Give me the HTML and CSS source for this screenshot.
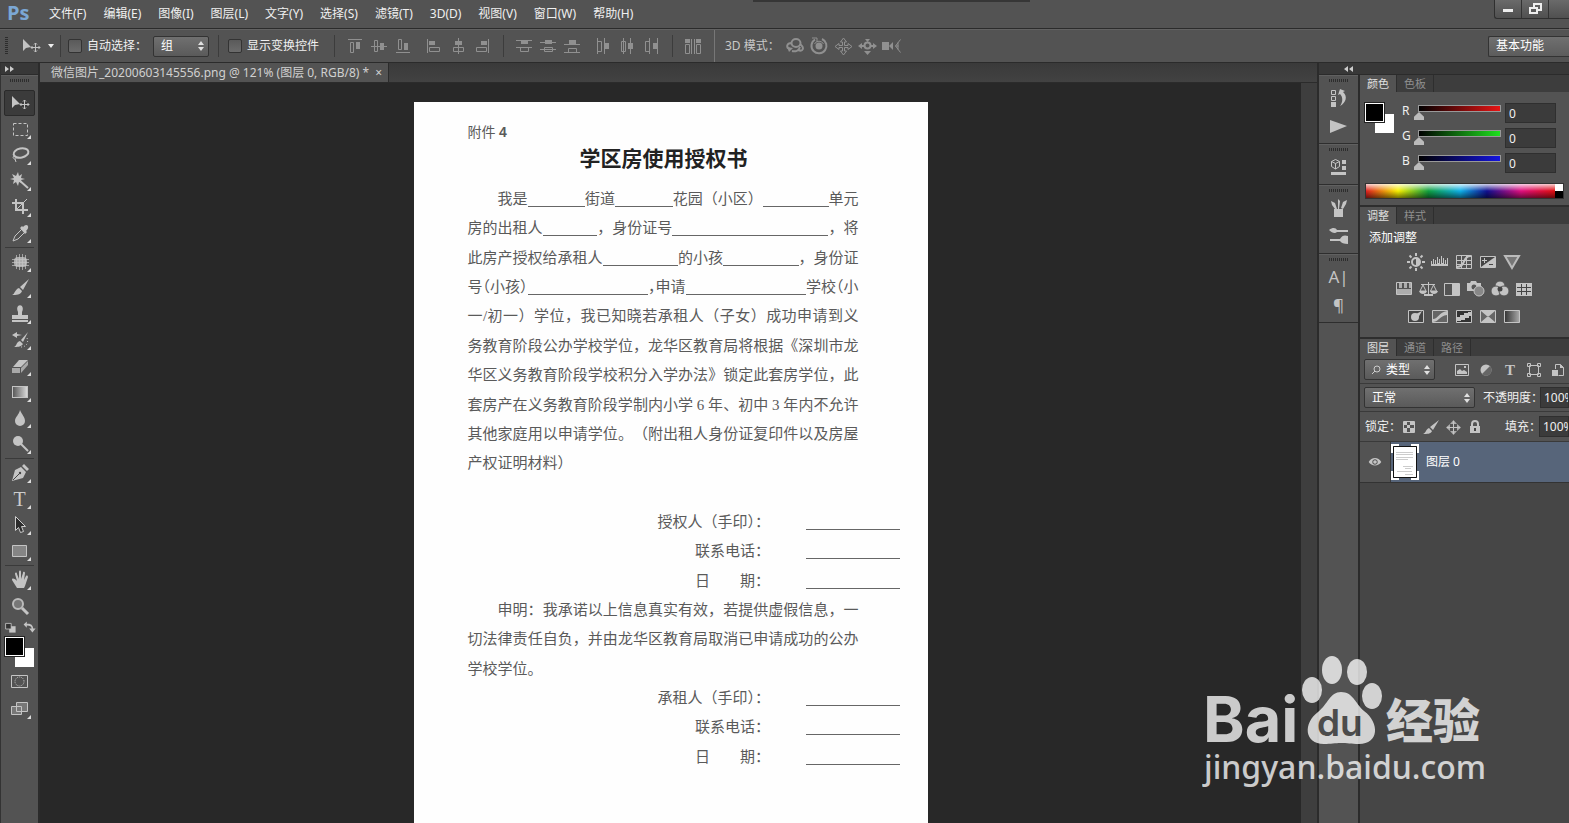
FILE: index.html
```html
<!DOCTYPE html>
<html lang="zh-CN">
<head>
<meta charset="utf-8">
<title>微信图片_20200603145556.png</title>
<link rel="stylesheet" href="styles.css">
</head>
<body>
<svg class="defs" aria-hidden="true">
  <defs>
    <linearGradient id="fade"><stop offset="0" stop-color="#555"/><stop offset="1" stop-color="#ddd"/></linearGradient>
    <linearGradient id="fadeDark"><stop offset="0" stop-color="#333"/><stop offset="1" stop-color="#aaa"/></linearGradient>
    <symbol id="move" viewBox="0 0 20 20"><path d="M2 3v12l3-3 5-1z"/><path class="s" d="M14.500 7v9M10 11.500h9M13 8.500l1.500-1.500 1.500 1.500M13 14.500l1.500 1.500 1.500-1.500M11.500 10l-1.500 1.500 1.500 1.500M17.500 10l1.500 1.500-1.500 1.500"/></symbol>
    <symbol id="updown" viewBox="0 0 6 10"><path d="M3 0l3 4H0zM3 10l3-4H0z"/></symbol>
  </defs>
</svg>

<header class="menubar">
  <span class="ps">Ps</span>
  <nav class="menus">
    <button>文件(F)</button><button>编辑(E)</button><button>图像(I)</button><button>图层(L)</button><button>文字(Y)</button><button>选择(S)</button><button>滤镜(T)</button><button>3D(D)</button><button>视图(V)</button><button>窗口(W)</button><button>帮助(H)</button>
  </nav>
  <div class="top-shadow"></div>
  <div class="winbtns">
    <button aria-label="最小化"><svg class="i" viewBox="0 0 20 20"><path d="M5 10h10v3H5z"/></svg></button>
    <button aria-label="还原"><svg class="i" viewBox="0 0 20 20"><path fill-rule="evenodd" d="M8 4h9v8h-4v3H4V8h4zm2 2v2h3v2h2V6zM6 10v3h5v-3z"/></svg></button>
    <button aria-label="关闭"></button>
  </div>
</header>

<div class="options">
  <span class="vgrip"></span>
  <svg class="i opt-move"><use href="#move"/></svg>
  <svg class="caret" viewBox="0 0 6 4"><path d="M0 0h6L3 4z"/></svg>
  <span class="vsep"></span>
  <label class="check"><input type="checkbox">自动选择：</label>
  <span class="select w-group"><select aria-label="自动选择"><option>组</option></select><svg class="ud"><use href="#updown"/></svg></span>
  <span class="vsep sp"></span>
  <label class="check wide"><input type="checkbox">显示变换控件</label>
  <span class="vsep"></span>
  <div class="aligns dim">
    <svg class="i" viewBox="0 0 20 20"><path class="s" d="M3 3.500h14M5.500 6.500h3v10h-3z"/><path d="M11 6h4v7h-4z"/></svg>
    <svg class="i" viewBox="0 0 20 20"><path class="s" d="M2 10.500h16M5.500 4.500h3v11h-3z"/><path d="M11 7h4v7h-4z"/></svg>
    <svg class="i" viewBox="0 0 20 20"><path class="s" d="M3 16.500h14M5.500 3.500h3v10h-3z"/><path d="M11 7h4v7h-4z"/></svg>
  </div>
  <div class="aligns dim next">
    <svg class="i" viewBox="0 0 20 20"><path class="s" d="M3.500 3v14M5.500 11.500h10v4h-10z"/><path d="M5 5h6v4H5z"/></svg>
    <svg class="i" viewBox="0 0 20 20"><path class="s" d="M10.500 2v16M5.500 11.500h10v4h-10z"/><path d="M7 5h7v4H7z"/></svg>
    <svg class="i" viewBox="0 0 20 20"><path class="s" d="M16.500 3v14M4.500 11.500h10v4h-10z"/><path d="M9 5h6v4H9z"/></svg>
  </div>
  <span class="vsep"></span>
  <div class="aligns dim">
    <svg class="i" viewBox="0 0 20 20"><path class="s" d="M2 4.500h16M2 11.500h16M6.500 11.500h8v4h-8z"/><path d="M7 4h7v4H7z"/></svg>
    <svg class="i" viewBox="0 0 20 20"><path class="s" d="M2 6.500h16M2 13.500h16M6.500 11.500h8v4h-8z"/><path d="M7 4h7v4H7z"/></svg>
    <svg class="i" viewBox="0 0 20 20"><path class="s" d="M2 8.500h16M2 16.500h16M6.500 12.500h8v4h-8z"/><path d="M7 4h7v4H7z"/></svg>
  </div>
  <div class="aligns dim next">
    <svg class="i" viewBox="0 0 20 20"><path class="s" d="M4.500 2v16M11.500 2v16M4.500 5.500h4v10h-4z"/><path d="M12 7h4v6h-4z"/></svg>
    <svg class="i" viewBox="0 0 20 20"><path class="s" d="M6.500 2v16M13.500 2v16M4.500 5.500h4v10h-4z"/><path d="M11 7h5v6h-5z"/></svg>
    <svg class="i" viewBox="0 0 20 20"><path class="s" d="M8.500 2v16M16.500 2v16M4.500 5.500h4v10h-4z"/><path d="M12 7h4v6h-4z"/></svg>
  </div>
  <span class="vsep"></span>
  <div class="aligns dim"><svg class="i" viewBox="0 0 20 20"><path class="s" d="M2.500 8.500h4v9h-4zM13.500 8.500h4v9h-4zM8.500 3v15M11.500 3v15"/><path d="M2 3h5v4H2zM13 3h5v4h-5z"/></svg></div>
  <span class="vsep light"></span>
  <span class="mode">3D 模式：</span>
  <div class="aligns dim">
    <svg class="i" viewBox="0 0 20 20"><g class="s2"><ellipse cx="11" cy="7" rx="4.500" ry="4"/><path d="M7 7c-6 0-6 5-2 6M7 15c4 1 7-1 8-4M13 14c5 2 7-2 2-6"/></g><path d="M2 11l6 1-4 4z"/></svg>
    <svg class="i" viewBox="0 0 20 20"><g class="s2"><path d="M6 3.500a7.500 7.500 0 1 0 7-.5"/></g><circle cx="10" cy="10" r="3.500"/><path class="s" d="M5.500 8a5 5 0 0 1 9 0M3 2h5v4"/></svg>
    <svg class="i" viewBox="0 0 20 20"><path class="s" d="M10.500 2l3 4h-2v3.500H15v-2l4 3-4 3v-2h-3.500V15h2l-3 4-3-4h2v-3.500H6v2l-4-3 4-3v2h3.500V6h-2z"/></svg>
    <svg class="i" viewBox="0 0 20 20"><circle class="s2" cx="10.500" cy="9.500" r="3"/><path d="M8 3h5l-2.500 3zM7 15h7l-3.500 4zM1 10l4-3v2h3v2H5v2zM20 10l-4-3v2h-3v2h3v2z"/></svg>
    <svg class="i" viewBox="0 0 20 20"><path d="M1 6h7v8H1zM8 10l4-4v8z"/><path class="s" d="M19.500 3.500l-5 6.500 5 6.500M14.500 10h3M17 6.500v7"/></svg>
  </div>
  <button class="workspace">基本功能</button>
</div>

<main class="work">
  <aside class="toolcol">
    <div class="strip"><svg viewBox="0 0 9 6"><path d="M0 0l4 3-4 3zM5 0l4 3-4 3z"/></svg></div>
    <div class="tools">
      <span class="hgrip"></span>
      <button class="tool on" aria-label="移动"><svg class="i"><use href="#move"/></svg></button>
      <button class="tool more" aria-label="选框"><svg class="i" viewBox="0 0 20 20"><path class="s" stroke-dasharray="3 2" d="M3.500 4.500h14v12h-14z"/></svg></button>
      <button class="tool more" aria-label="套索"><svg class="i" viewBox="0 0 20 20"><g class="s2"><ellipse cx="11" cy="8" rx="7.500" ry="4.500" transform="rotate(-12 11 8)"/></g><path class="s" d="M5 11c-3 0-2 3 0 3s1-2 0-3M5 14l1 3"/></svg></button>
      <button class="tool more" aria-label="魔棒"><svg class="i" viewBox="0 0 20 20"><path d="M8 1l1 4 3-2-1 4 4 1-4 1 1 3-3-1-1 4-2-4-3 2 1-4-4-1 4-1-2-4 4 2z"/><path class="s2" d="M9 9l9 8"/></svg></button>
      <button class="tool more" aria-label="裁剪"><svg class="i" viewBox="0 0 20 20"><path class="s2" d="M6 2v11h12M2 6h11v11"/><path class="s" d="M7 12l10-10"/></svg></button>
      <button class="tool more" aria-label="吸管"><svg class="i" viewBox="0 0 20 20"><path class="s" d="M3 18l2-5 7-7 3 3-7 7z"/><path d="M10 5l5 6 2-2-1-1c4-3 2-8-2-5l-1 1-1-1z"/></svg></button>
      <hr>
      <button class="tool more" aria-label="修复"><svg class="i" viewBox="0 0 20 20"><rect x="4" y="5" width="13" height="10" rx="4" opacity=".8"/><path class="s" d="M6.500 3v14M9.500 2v16M12.500 2v16M15.500 3v14M2 7.500h17M2 10.500h17M2 13.500h17" opacity=".7"/></svg></button>
      <button class="tool more" aria-label="画笔"><svg class="i" viewBox="0 0 20 20"><path d="M19 1L10 9l3 3zM9 10l3 3c-1 4-6 4-10 4 3-1 3-6 7-7z"/></svg></button>
      <button class="tool more" aria-label="图章"><svg class="i" viewBox="0 0 20 20"><path d="M8 8c-4-9 8-9 4 0v3h6v4H2v-4h6zM2 16h16v2H2z"/></svg></button>
      <button class="tool more" aria-label="历史画笔"><svg class="i" viewBox="0 0 20 20"><path d="M18 2l-7 8 2 2zM10 11l3 3c-2 3-6 3-9 3 3-1 2-5 6-6zM2 5l5-3v2l5 1-5 1v2z"/><path class="s" stroke-dasharray="1 2" d="M17 8c2 5-1 9-6 9"/></svg></button>
      <button class="tool more" aria-label="橡皮擦"><svg class="i" viewBox="0 0 20 20"><path d="M9 4h9l-7 7H3z"/><path opacity=".75" d="M2 12h8v5H2zM11 12l7-7v4l-7 8z"/></svg></button>
      <button class="tool more" aria-label="渐变"><svg class="i" viewBox="0 0 20 20"><rect class="edge" x="2.500" y="4.500" width="15" height="11" fill="url(#fade)"/></svg></button>
      <button class="tool more" aria-label="模糊"><svg class="i" viewBox="0 0 20 20"><path d="M10 2c2 5 5 7 5 11a5 5 0 0 1-10 0c0-4 4-6 5-11z"/></svg></button>
      <button class="tool more" aria-label="减淡"><svg class="i" viewBox="0 0 20 20"><circle cx="8" cy="7" r="5"/><path class="s2" d="M11 10l7 7"/></svg></button>
      <hr>
      <button class="tool more" aria-label="钢笔"><svg class="i" viewBox="0 0 20 20"><path d="M2 18l3-11 6-3 5 5-3 6zM12 3l2-2 5 5-2 2z"/><path class="cut" d="M3 17l6-6"/><circle cx="10" cy="10" r="1.200" fill="#444"/></svg></button>
      <button class="tool more type" aria-label="文字">T</button>
      <button class="tool more" aria-label="路径选择"><svg class="i" viewBox="0 0 20 20"><path fill="#2c2c2c" stroke="#ccc" d="M5.500 1.500v14l3-3 2 5 3-1-2-5h4z"/></svg></button>
      <button class="tool more" aria-label="矩形"><svg class="i" viewBox="0 0 20 20"><path class="edge" fill="#858585" d="M2.500 4.500h14v11h-14z"/></svg></button>
      <hr>
      <button class="tool more" aria-label="抓手"><svg class="i" viewBox="0 0 20 20"><path d="M7 18l-5-8c0-2 2-2 5 1L5 4c0-2 2-2 2 0l2 5V2c0-2 2-2 2 0v7l2-6c0-2 2-1 2 0l-1 7 2-4c1-1 2 0 2 1l-3 9-1 2z"/></svg></button>
      <button class="tool" aria-label="缩放"><svg class="i" viewBox="0 0 20 20"><circle cx="8" cy="8" r="5" fill="#777" stroke="#bbb" stroke-width="2"/><path class="s3" d="M12 12l6 6"/></svg></button>
      <div class="mini">
        <svg class="i" viewBox="0 0 20 20"><path d="M9 9h8v8H9z"/><path fill="#333" stroke="#ccc" d="M4.500 5.500h7v7h-7z"/></svg>
        <svg class="i" viewBox="0 0 20 20"><path d="M2 7l4-4v3c5-1 8 2 8 6h3l-4 5-4-5h3c0-3-2-4-6-4v3z"/></svg>
      </div>
      <div class="fgbg"><span class="bgc"></span><span class="fgc"></span></div>
      <button class="tool" aria-label="快速蒙版"><svg class="i" viewBox="0 0 20 20"><path class="s" d="M1.500 3.500h16v12h-16z"/><circle class="s" stroke-dasharray="1 1" cx="9.500" cy="9.500" r="4.500"/></svg></button>
      <button class="tool more" aria-label="屏幕模式"><svg class="i" viewBox="0 0 20 20"><path class="edge" fill="#777" d="M1.500 7.500h10v8h-10zM6.500 3.500h11v9h-11z"/></svg></button>
    </div>
  </aside>

  <section class="docarea">
    <div class="tabs"><div class="doctab">微信图片_20200603145556.png @ 121% (图层 0, RGB/8) *<button aria-label="关闭文档">×</button></div></div>
    <div class="canvas">
      <article class="page">
        <p class="attach">附件 <b>4</b></p>
        <h1>学区房使用授权书</h1>
        <div class="lines">
          <p class="fl ind">我是<i class="b56"></i>街道<i class="b56"></i>花园（小区）<i class="b64"></i>单元</p>
          <p class="fl">房的出租人<i class="b56"></i>，身份证号<i class="b160"></i>，将</p>
          <p class="fl">此房产授权给承租人<i class="b76"></i>的小孩<i class="b76"></i>，身份证</p>
          <p class="fl"><span class="half">号（小孩）</span><i class="b112"></i><span class="half">，申请</span><i class="b112"></i><span class="half">学校（小</span></p>
          <p class="ju">一/初一）学位，我已知晓若承租人（子女）成功申请到义</p>
          <p class="ju">务教育阶段公办学校学位，龙华区教育局将根据《深圳市龙</p>
          <p class="ju">华区义务教育阶段学校积分入学办法》锁定此套房学位，此</p>
          <p class="ju">套房产在义务教育阶段学制内小学 6 年、初中 3 年内不允许</p>
          <p class="ju">其他家庭用以申请学位。（附出租人身份证复印件以及房屋</p>
          <p>产权证明材料）</p>
          <p>&nbsp;</p>
          <p class="sign">授权人（手印<span class="half">）：</span><i></i></p>
          <p class="sign"><span class="half">联系电话：</span><i></i></p>
          <p class="sign"><span class="half">日　　期：</span><i></i></p>
          <p class="ju ind">申明：我承诺以上信息真实有效，若提供虚假信息，一</p>
          <p class="ju">切法律责任自负，并由龙华区教育局取消已申请成功的公办</p>
          <p>学校学位。</p>
          <p class="sign">承租人（手印<span class="half">）：</span><i></i></p>
          <p class="sign"><span class="half">联系电话：</span><i></i></p>
          <p class="sign"><span class="half">日　　期：</span><i></i></p>
        </div>
      </article>
      <div class="vscroll"></div>
    </div>
  </section>

  <aside class="right">
    <div class="strip back"><svg viewBox="0 0 9 6"><path d="M4 0L0 3l4 3zM9 0L5 3l4 3z"/></svg></div>
    <div class="rightcols">
      <div class="dock">
        <div class="dgroup"><span class="hgrip"></span>
          <svg class="i" viewBox="0 0 20 20"><path class="s" d="M2.500 2.500h4v4h-4zM2.500 8.500h4v4h-4z"/><path d="M2 14h5v5H2zM9 7l2-6 5 2-2 1c5 4 3 11-3 14 3-4 3-9 0-12z"/></svg>
          <svg class="i" viewBox="0 0 20 20"><path d="M1 4l17 6-17 7z"/></svg>
        </div>
        <div class="dgroup"><span class="hgrip"></span>
          <svg class="i" viewBox="0 0 20 20"><path class="s" d="M6.500 2.500l4 2v5l-4 2.500-4-2.500v-5zM2.500 4.500l4 2 4-2M6.500 6.500V12"/><path d="M13 3h4v4h-4zM13 9h4v4h-4zM2 15h15v3H2z"/></svg>
        </div>
        <div class="dgroup"><span class="hgrip"></span>
          <svg class="i" viewBox="0 0 20 20"><path d="M5 11h9v8H5zM2 3l4 2 2 6H6L3 7zM9 1l2 2-1 8H9zM12 10l2-6 4-2-1 4-3 5z"/></svg>
          <svg class="i" viewBox="0 0 20 20"><path d="M0 4c4-3 7-2 8 0h11v2H8c-2 2-5 1-8-2zM1 13h10c2-4 5-4 8-3v8c-4 0-7-1-8-3H1z"/></svg>
        </div>
        <div class="dgroup"><span class="hgrip"></span>
          <span class="glyph">A|</span><span class="glyph">¶</span>
        </div>
      </div>
      <div class="panels">
        <section class="panel">
          <div class="ptabs"><button class="on">颜色</button><button>色板</button></div>
          <div class="color">
            <div class="fgbg"><span class="bgc"></span><span class="fgc"></span></div>
            <div class="sliders">
              <div class="srow"><label for="r">R</label><input class="red" type="range" aria-label="红" value="0" max="255"><input id="r" type="text" value="0"></div>
              <div class="srow"><label for="g">G</label><input class="green" type="range" aria-label="绿" value="0" max="255"><input id="g" type="text" value="0"></div>
              <div class="srow"><label for="b">B</label><input class="blue" type="range" aria-label="蓝" value="0" max="255"><input id="b" type="text" value="0"></div>
            </div>
          </div>
          <div class="spectrum"><span class="hues"></span><span class="bw"></span></div>
        </section>
        <section class="panel">
          <div class="ptabs"><button class="on">调整</button><button>样式</button></div>
          <h2>添加调整</h2>
          <div class="adj">
            <div class="arow">
              <svg class="i" viewBox="0 0 20 20"><path d="M10 6a4 4 0 0 1 0 8z"/><g class="s2"><circle cx="10" cy="10" r="4"/><path d="M10 1v3M10 16v3M1 10h3M16 10h3M3.500 3.500l2 2M14.500 14.500l2 2M3.500 16.500l2-2M14.500 5.500l2-2"/></g></svg>
              <svg class="i" viewBox="0 0 20 20"><path d="M1 14V9h1v3h1V7h1v5h1V8h1v4h1V5h1v6h1V7h1v5h1V4h1v7h1V6h1v6h1V8h1v4h1V6h1v8z"/></svg>
              <svg class="i" viewBox="0 0 20 20"><path class="s" d="M2.500 3.500h15v13h-15zM7.500 4v12M12.500 4v12M3 8.500h14M3 12.500h14"/><path class="s2" d="M3 15c9 0 5-11 14-11"/></svg>
              <svg class="i" viewBox="0 0 20 20"><path class="edge" fill="#444" d="M2.500 4.500h15v11h-15z"/><path d="M17 5v10H3z"/><path class="s" d="M4 8.500h5M6.500 6v5"/><path class="cut" d="M11 12.500h4"/></svg>
              <svg class="i" viewBox="0 0 20 20"><path fill="#777" stroke="#bbb" stroke-width="2" d="M3 4h14l-7 12z"/></svg>
            </div>
            <div class="arow">
              <svg class="i" viewBox="0 0 20 20"><path class="s" d="M2.500 3.500h15v12h-15z"/><path d="M5 4h3v5H5zM10 4h3v5h-3zM15 4h2v5h-2zM3 10h14v5H3z" opacity=".8"/></svg>
              <svg class="i" viewBox="0 0 20 20"><path class="s" d="M3 5.500h14M10.500 3v13M5 6l-3 6h6zM15.500 6l-3 6h6z"/><path d="M1 12h8c-1 4-7 4-8 0zM12 12h8c-1 4-7 4-8 0zM6 15h9v2H6z"/></svg>
              <svg class="i" viewBox="0 0 20 20"><path class="s" d="M2.500 4.500h15v12h-15z"/><path d="M10 5h7v11h-7z"/></svg>
              <svg class="i" viewBox="0 0 20 20"><path d="M1 4h3l1-2h5l1 2h4v8H1z"/><circle cx="8" cy="8" r="2.500" fill="#555"/><circle class="edge" cx="13" cy="12" r="5" fill="#888"/></svg>
              <svg class="i" viewBox="0 0 20 20"><g stroke="#555"><circle cx="10" cy="7" r="5"/><circle cx="6" cy="12" r="5"/><circle cx="14" cy="12" r="5"/></g><circle cx="10" cy="10" r="2.500" fill="#444"/></svg>
              <svg class="i" viewBox="0 0 20 20"><path d="M2 4h16v13H2z"/><path class="cut" d="M3 8.500h14M3 12.500h14M7.500 5v11M12.500 5v11"/></svg>
            </div>
            <div class="arow">
              <svg class="i" viewBox="0 0 20 20"><path class="edge" fill="#444" d="M2.500 4.500h15v12h-15z"/><circle cx="9" cy="11" r="4"/><path d="M8 9l8-4-4 7z"/></svg>
              <svg class="i" viewBox="0 0 20 20"><path class="edge" fill="#666" d="M2.500 4.500h15v12h-15z"/><path d="M3 13C8 13 9 6 17 5v4c-8 1-7 6-14 7z"/></svg>
              <svg class="i" viewBox="0 0 20 20"><path class="edge" fill="#333" d="M2.500 4.500h15v12h-15z"/><path d="M3 11h3V9h4V7h4V6h3v4h-2v2h-4v2H7v1H3z"/></svg>
              <svg class="i" viewBox="0 0 20 20"><path class="edge" fill="#666" d="M2.500 4.500h15v12h-15z"/><path d="M3 5h14l-7 6zM3 16h14l-7-6z"/></svg>
              <svg class="i" viewBox="0 0 20 20"><path class="edge" fill="url(#fadeDark)" d="M2.500 4.500h15v12h-15z"/></svg>
            </div>
          </div>
        </section>
        <section class="panel layers">
          <div class="ptabs"><button class="on">图层</button><button>通道</button><button>路径</button></div>
          <div class="lrow">
            <span class="select w-type"><svg class="mag" viewBox="0 0 10 10"><circle cx="6" cy="4" r="3"/><path d="M4 6L1 9"/></svg><select aria-label="筛选"><option>类型</option></select><svg class="ud"><use href="#updown"/></svg></span>
            <div class="filters">
              <svg class="i" viewBox="0 0 20 20"><path class="edge" fill="#555" d="M3.500 4.500h13v11h-13z"/><path d="M5 14v-3l3-2 2 2 2-1 3 2v2zM12 6h2v2h-2z"/></svg>
              <svg class="i" viewBox="0 0 20 20"><circle cx="10" cy="10" r="5.500"/><path fill="#666" d="M14 6a5.500 5.500 0 0 1-8 8z"/></svg>
              <span class="tglyph">T</span>
              <svg class="i" viewBox="0 0 20 20"><path class="s" d="M5.500 5.500h9v9h-9zM3.500 3.500h3v3h-3zM13.500 3.500h3v3h-3zM3.500 13.500h3v3h-3zM13.500 13.500h3v3h-3z"/></svg>
              <svg class="i" viewBox="0 0 20 20"><path class="s" d="M7.500 9V4.500h5l3 3v8h-5"/><path d="M4 10h6v6H4zM12 4v4h4z"/></svg>
            </div>
          </div>
          <div class="lrow">
            <span class="select w-blend"><select aria-label="混合模式"><option>正常</option></select><svg class="ud"><use href="#updown"/></svg></span>
            <label class="pct" for="op">不透明度：</label><input id="op" class="num" type="text" value="100%">
          </div>
          <div class="lrow lock">
            <span>锁定：</span>
            <div class="locks">
              <svg class="i" viewBox="0 0 20 20"><path class="s" d="M4.500 4.500h11v11h-11z"/><path d="M5 5h3v3H5zM11 5h4v3h-4zM8 8h3v3H8zM5 11h3v4H5zM11 11h4v4h-4z"/></svg>
              <svg class="i" viewBox="0 0 20 20"><path d="M18 3l-9 7 3 3zM8 11l3 3c-1 3-5 3-9 3 3-1 3-5 6-6z"/></svg>
              <svg class="i" viewBox="0 0 20 20"><path class="s" d="M10.500 4v13M4 10.500h13"/><path d="M7 7h7l-3.500-4zM7 14h7l-3.500 4zM7 7v7l-4-3.500zM14 7v7l4-3.500z" opacity=".8"/></svg>
              <svg class="i" viewBox="0 0 20 20"><path class="s2" d="M7 10V7c0-4 6-4 6 0v3"/><path d="M5 9h10v7H5z"/><path fill="#444" d="M9 11h2v3H9z"/></svg>
            </div>
            <label class="pct" for="fi">填充：</label><input id="fi" class="num" type="text" value="100%">
          </div>
          <div class="layer">
            <button class="eye" aria-label="可见性"><svg class="i" viewBox="0 0 20 20"><path fill-rule="evenodd" d="M3 10c3-6 11-6 14 0-3 5-11 5-14 0zm4 0c0 4 6 4 6 0s-6-4-6 0z"/><circle cx="10" cy="10" r="2"/></svg></button>
            <div class="layerbody">
              <svg class="thumb" viewBox="0 0 28 36"><path fill="#fff" stroke="#111" d="M2.500 2.500h23v31h-23z"/><path stroke="#ccc" d="M5 8.500h17M5 10.500h17M5 13.500h17M5 15.500h12M12 22.500h10M14 24.500h6M6 27.500h15M14 30.500h8"/><path fill="none" stroke="#fff" stroke-width="2" d="M1 9V1h7M20 1h7v8M27 27v8h-7M8 35H1v-8"/></svg>
              <span>图层 0</span>
            </div>
          </div>
        </section>
      </div>
    </div>
  </aside>
</main>

<svg class="watermark" viewBox="0 0 290 140" aria-label="Baidu 经验">
  <text class="wm-bai" x="3" y="92">Bai</text>
  <ellipse cx="112" cy="40" rx="10" ry="13"/><ellipse cx="132" cy="20" rx="10" ry="14"/><ellipse cx="157" cy="22" rx="10" ry="13"/><ellipse cx="172" cy="46" rx="10" ry="13"/>
  <path d="M141 42c12 0 14 11 23 19 16 12 15 33-5 33-8 0-12-1-18-1s-10 1-17 1c-20 0-21-21-6-32 10-8 12-20 23-20z"/>
  <text class="wm-du" x="117" y="86">du</text>
  <text class="wm-jy" x="186" y="88">经验</text>
  <text class="wm-url" x="4" y="129">jingyan.baidu.com</text>
</svg>
</body>
</html>
```

FILE: styles.css
```css
* { box-sizing: border-box; }
body {
  margin: 0;
  height: 100vh;
  display: flex;
  flex-direction: column;
  overflow: hidden;
  position: relative;
  background: #535353;
  color: #f0f0f0;
  font: 12px/16px "Noto Sans", "Noto Sans CJK SC", sans-serif;
}
button, input, select { font: inherit; color: inherit; margin: 0; padding: 0; border: 0; background: none; border-radius: 0; }
p, h1, h2 { margin: 0; font-weight: normal; }
.defs { position: absolute; width: 0; height: 0; }

.i { width: 20px; height: 20px; fill: #c4c4c4; display: block; flex: none; }
.s { fill: none; stroke: #c4c4c4; stroke-width: 1; }
.s2 { fill: none; stroke: #c4c4c4; stroke-width: 2; }
.s3 { fill: none; stroke: #c4c4c4; stroke-width: 3; }
.edge { stroke: #c4c4c4; }
.cut { fill: none; stroke: #444; }
.dim .i { fill: #909090; }
.dim .s, .dim .s2 { stroke: #909090; }

/* menu bar */
.menubar { flex: none; height: 29px; display: flex; border-bottom: 1px solid #2b2b2b; position: relative; }
.ps { width: 49px; padding-left: 7px; font: bold 20px/26px "Open Sans", sans-serif; color: #7ba7d4; }
.menus { display: flex; gap: 17px; height: 28px; }
.menus button { line-height: 28px; white-space: nowrap; }
.top-shadow { position: absolute; top: 0; left: 48%; width: 277px; height: 2px; background: #363636; }
.winbtns { margin-left: auto; display: flex; height: 19px; border: 1px solid #2f2f2f; border-width: 0 0 1px 1px; border-radius: 0 0 0 3px; background: linear-gradient(#6a6a6a, #505050); }
.winbtns button { width: 27px; border-right: 1px solid #333; display: flex; justify-content: center; align-items: center; }
.winbtns button:last-child { width: 20px; border: 0; }
.winbtns .i { fill: #eee; }

/* options bar */
.options { flex: none; height: 34px; display: flex; align-items: center; border-top: 1px solid #626262; border-bottom: 1px solid #2b2b2b; padding-left: 5px; }
.vgrip { width: 3px; height: 18px; background: repeating-linear-gradient(#2d2d2d 0 1px, #535353 1px 2px); }
.opt-move { margin-left: 13px; }
.caret { width: 6px; height: 4px; fill: #eee; margin: 0 6px 0 7px; }
.vsep { width: 1px; height: 22px; background: #3c3c3c; flex: none; }
.vsep.sp { margin-left: 9px; }
.vsep.light { background: #777; height: 32px; }
.check { display: flex; align-items: center; padding-left: 7px; width: 92px; white-space: nowrap; }
.check.wide { width: 115px; padding-left: 9px; }
.check input { appearance: none; width: 14px; height: 14px; border: 1px solid #333; border-radius: 2px; background: linear-gradient(#5a5a5a, #6c6c6c); margin-right: 5px; flex: none; }
.select { display: flex; align-items: center; height: 21px; border: 1px solid #333; border-radius: 2px; background: linear-gradient(#707070, #5a5a5a); padding: 0 4px 0 7px; flex: none; }
.select select { appearance: none; flex: 1; min-width: 0; height: 19px; color: #fff; outline: 0; }
.ud { width: 6px; height: 10px; fill: #e0e0e0; flex: none; }
.w-group { width: 56px; }
.aligns { display: flex; gap: 4px; padding: 0 11px 0 10px; }
.aligns.next { padding-left: 0; }
.vsep.light + .mode { padding-left: 10px; width: 70px; color: #c8c8c8; white-space: nowrap; }
.mode + .aligns { padding-left: 0; }
.workspace { margin-left: auto; width: 81px; height: 21px; border: 1px solid #333; border-right: 0; border-radius: 2px 0 0 2px; background: linear-gradient(#707070, #5c5c5c); text-align: left; padding-left: 7px; color: #fff; }

/* work area */
.work { flex: 1; min-height: 0; display: flex; }
.strip { height: 12px; flex: none; background: #383838; border-bottom: 1px solid #2b2b2b; padding: 3px 0 0 4px; }
.strip svg { display: block; width: 9px; height: 6px; fill: #ccc; }
.toolcol { width: 40px; flex: none; display: flex; flex-direction: column; border-right: 2px solid #2b2b2b; border-left: 1px solid #333; }
.tools { flex: 1; min-height: 0; display: flex; flex-direction: column; align-items: center; border-top: 1px solid #5f5f5f; }
.hgrip { display: block; width: 20px; height: 3px; margin: 3px auto 0; flex: none; background: repeating-linear-gradient(90deg, #2d2d2d 0 1px, #535353 1px 2px); }
.tools .hgrip { margin-bottom: 8px; }
.tool { width: 31px; height: 26px; flex: none; display: flex; align-items: center; justify-content: center; position: relative; }
.tool.on { background: #3b3b3b; border: 1px solid #2a2a2a; border-radius: 2px; }
.tool.more::after { content: ""; position: absolute; right: 4px; bottom: 3px; border: 2px solid #ddd; border-top-color: transparent; border-left-color: transparent; }
.tool.type { font: 20px/26px "Liberation Serif", serif; color: #ccc; }
.tools hr { width: 29px; height: 1px; margin: 1px 0; border: 0; background: #3a3a3a; flex: none; }
.mini { display: flex; gap: 4px; height: 18px; flex: none; }
.mini .i { width: 16px; height: 16px; }
.fgbg { width: 29px; height: 30px; flex: none; display: grid; grid-template: 11px 8px 11px / 10px 9px 10px; }
.fgc { grid-area: 1 / 1 / 3 / 3; background: #000; border: 1px solid #fff; outline: 1px solid #222; }
.bgc { grid-area: 2 / 2 / 4 / 4; background: #fff; }
.tools > .fgbg + .tool { margin-top: 1px; height: 28px; }

.docarea { flex: 1; min-width: 0; display: flex; flex-direction: column; }
.tabs { height: 20px; flex: none; background: linear-gradient(#3a3a3a, #424242); border-bottom: 1px solid #2b2b2b; display: flex; }
.doctab { background: #535353; padding: 0 6px 0 11px; line-height: 20px; color: #d0d0d0; display: flex; gap: 6px; white-space: nowrap; border-right: 1px solid #2b2b2b; }
.canvas { flex: 1; min-height: 0; background: #282828; display: flex; justify-content: center; padding-top: 19px; position: relative; overflow: hidden; }
.vscroll { position: absolute; right: 0; top: 0; bottom: 0; width: 16px; background: #3e3e3e; }

/* document */
.page { width: 514px; margin-right: 16px; background: #fefefe; color: #5a5a5a; padding: 20px 28px 51px 54px; display: flex; flex-direction: column; font: 15px/20px "Liberation Serif", "Noto Sans CJK SC", serif; text-spacing-trim: space-all; }
.attach { font-size: 14px; }
.attach b { font-family: "Liberation Sans", sans-serif; font-size: 14px; }
.page h1 { font: bold 21px/28px "Noto Sans CJK SC", sans-serif; color: #222; text-align: center; margin-right: 40px; }
.lines { flex: 1; display: flex; flex-direction: column; justify-content: space-between; padding-top: 14px; }
.lines p { width: 391px; height: 29px; line-height: 29px; white-space: nowrap; }
.lines .ind { padding-left: 30px; }
.lines .fl { display: flex; }
.lines i { display: block; height: 1px; margin-top: 21px; background: #666; }
.fl i { flex: 1 1 0; }
.fl .b56 { flex-grow: 56; }
.fl .b64 { flex-grow: 64; }
.fl .b76 { flex-grow: 76; }
.fl .b112 { flex-grow: 112; }
.fl .b160 { flex-grow: 160; }
.half { font-feature-settings: "halt"; }
.ju { text-align: justify; text-align-last: justify; }
.lines .sign { width: 432px; display: flex; justify-content: flex-end; }
.sign i { width: 94px; margin-left: 43px; }

/* right side */
.right { flex: none; width: 252px; display: flex; flex-direction: column; border-left: 2px solid #2b2b2b; }
.strip.back { padding-left: 25px; }
.rightcols { flex: 1; min-height: 0; display: flex; }
.dock { width: 41px; flex: none; border-right: 2px solid #2b2b2b; }
.dgroup { border-bottom: 1px solid #2e2e2e; border-top: 1px solid #606060; display: flex; flex-direction: column; align-items: center; gap: 8px; padding-bottom: 7px; }
.dgroup .hgrip { height: 3px; margin-bottom: -2px; }
.glyph { font: 17px/20px "Noto Sans", sans-serif; color: #c4c4c4; }
.panels { flex: 1; min-width: 0; display: flex; flex-direction: column; background: #464646; }
.panel { background: #535353; border-bottom: 2px solid #2e2e2e; }
.ptabs { display: flex; height: 17px; background: #3d3d3d; }
.ptabs button { padding: 0 6px; height: 17px; line-height: 17px; font-size: 11px; color: #8f8f8f; border-right: 1px solid #2e2e2e; width: 37px; white-space: nowrap; }
.ptabs .on { background: #535353; color: #e0e0e0; }
.color { display: flex; padding: 11px 0 0 5px; }
.sliders { flex: 1; padding-left: 8px; }
.srow { display: flex; height: 25px; }
.srow label { width: 10px; }
.srow input[type="range"] { appearance: none; width: 81px; height: 5px; margin: 3px 5px 0 7px; border: 0; }
.srow input::-webkit-slider-runnable-track { height: 5px; outline: 1px solid #999; }
.red::-webkit-slider-runnable-track { background: linear-gradient(90deg, #000, #e81414); }
.green::-webkit-slider-runnable-track { background: linear-gradient(90deg, #000, #1ee01e); }
.blue::-webkit-slider-runnable-track { background: linear-gradient(90deg, #000, #1414e0); }
.srow input::-webkit-slider-thumb { appearance: none; width: 10px; height: 8px; margin-top: 6px; margin-left: -5px; background: #bbb; clip-path: polygon(50% 0, 100% 60%, 100% 100%, 0 100%, 0 60%); }
.srow input[type="text"], .num { background: #3b3b3b; border: 1px solid #2f2f2f; padding-left: 3px; height: 20px; }
.srow input[type="text"] { width: 51px; }
.spectrum { margin: 5px 5px 6px; height: 16px; border: 1px solid #333; display: flex; }
.hues { flex: 1; background: linear-gradient(#fffc 0, #fff0 50%, #0000 50%, #0008 100%), linear-gradient(90deg, #e02020, #f5f000 17%, #10a040 33%, #10b0e8 50%, #101090 64%, #e01080 82%, #e01010); }
.bw { width: 8px; background: linear-gradient(#fff 50%, #000 50%); }
.panel h2 { font-size: 12px; line-height: 16px; padding: 6px 0 0 9px; color: #fff; }
.adj { padding: 2px 0 8px; width: 208px; }
.arow { display: flex; justify-content: center; gap: 4px; height: 27px; padding-top: 4px; }
.layers { border-bottom: 1px solid #333; }
.lrow { display: flex; align-items: center; height: 28px; padding-left: 4px; border-bottom: 1px solid #3a3a3a; white-space: nowrap; }
.w-type { width: 71px; padding-left: 6px; }
.mag { width: 10px; height: 10px; fill: none; stroke: #ccc; stroke-width: 1; margin-right: 5px; }
.w-blend { width: 111px; }
.filters { display: flex; gap: 4px; margin-left: 17px; }
.tglyph { width: 20px; font: bold 15px/20px "Liberation Serif", serif; text-align: center; color: #c4c4c4; }
.pct { width: 57px; margin-left: 8px; }
.num { flex: 1; min-width: 0; height: 21px; }
.lock { padding-left: 5px; height: 30px; }
.locks { display: flex; gap: 2px; }
.lock > span { width: 34px; }
.lock .pct { width: 34px; margin-left: 20px; }
.layer { display: flex; height: 40px; }
.eye { width: 31px; display: flex; align-items: center; justify-content: center; border-right: 1px solid #3a3a3a; }
.eye .i { width: 18px; }
.layerbody { flex: 1; background: #57657a; display: flex; align-items: center; gap: 7px; color: #fff; }
.thumb { width: 28px; height: 36px; }

/* watermark */
.watermark { position: absolute; right: 79px; bottom: 33px; width: 290px; height: 140px; fill: #fff; opacity: 0.76; }
.wm-bai { font: bold 63px Inter, sans-serif; }
.wm-du { font: 600 37px Inter, sans-serif; fill: #4a4a4a; }
.wm-jy { font: 900 47px "Noto Sans CJK SC", sans-serif; }
.wm-url { font: 500 32px "Noto Sans", sans-serif; }
```
